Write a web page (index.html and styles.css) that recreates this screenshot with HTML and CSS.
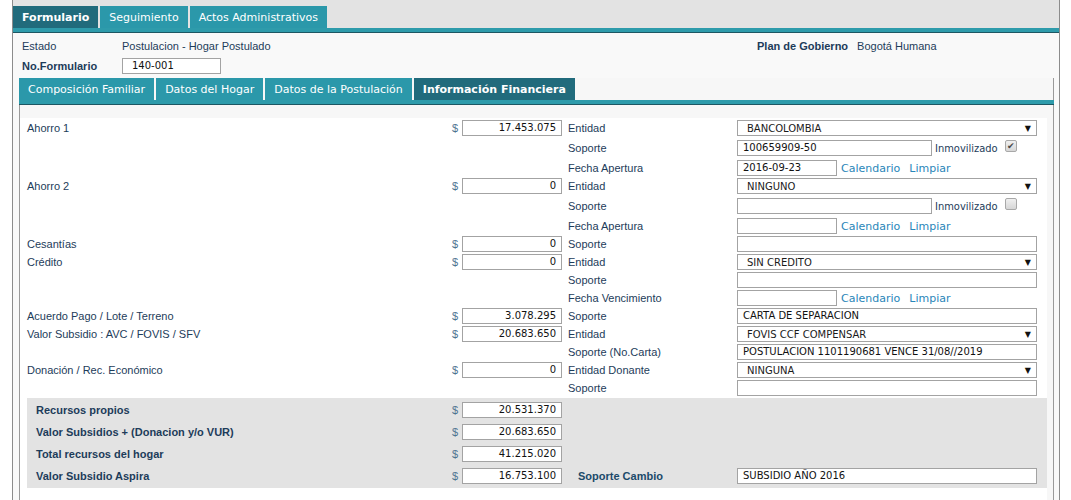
FILE: index.html
```html
<!DOCTYPE html>
<html lang="es">
<head>
<meta charset="utf-8">
<title>Formulario - Información Financiera</title>
<link rel="stylesheet" href="styles.css">
</head>
<body>
<div class="page">
  <div class="top-tabs">
    <div class="tab active">Formulario</div>
    <div class="tab">Seguimiento</div>
    <div class="tab">Actos Administrativos</div>
  </div>
  <div class="outer">
    <div class="head">
      <div class="head-row">
        <span class="hl">Estado</span>
        <span class="hv">Postulacion - Hogar Postulado</span>
        <span class="plan"><b>Plan de Gobierno</b><span class="plan-v">Bogotá Humana</span></span>
      </div>
      <div class="head-row">
        <span class="hl b">No.Formulario</span>
        <span class="field f-form">140-001</span>
      </div>
    </div>
    <div class="inner">
      <div class="inner-tabs">
        <div class="tab">Composición Familiar</div>
        <div class="tab">Datos del Hogar</div>
        <div class="tab">Datos de la Postulación</div>
        <div class="tab active">Información Financiera</div>
      </div>
      <div class="panel">
        <div class="table">
          <div class="row">
            <span class="lab">Ahorro 1</span><span class="cur">$</span><span class="field amt">17.453.075</span>
            <span class="mid">Entidad</span><span class="select">BANCOLOMBIA<i class="arrow">▼</i></span>
          </div>
          <div class="row tall">
            <span></span><span></span><span></span>
            <span class="mid">Soporte</span>
            <span class="cell"><span class="field f-sop">100659909-50</span><span class="inm">Inmovilizado</span><span class="chk on">✔</span></span>
          </div>
          <div class="row">
            <span></span><span></span><span></span>
            <span class="mid">Fecha Apertura</span>
            <span class="cell"><span class="field f-date">2016-09-23</span><a class="lnk">Calendario</a><a class="lnk">Limpiar</a></span>
          </div>
          <div class="row">
            <span class="lab">Ahorro 2</span><span class="cur">$</span><span class="field amt">0</span>
            <span class="mid">Entidad</span><span class="select">NINGUNO<i class="arrow">▼</i></span>
          </div>
          <div class="row tall">
            <span></span><span></span><span></span>
            <span class="mid">Soporte</span>
            <span class="cell"><span class="field f-sop"></span><span class="inm">Inmovilizado</span><span class="chk"></span></span>
          </div>
          <div class="row">
            <span></span><span></span><span></span>
            <span class="mid">Fecha Apertura</span>
            <span class="cell"><span class="field f-date"></span><a class="lnk">Calendario</a><a class="lnk">Limpiar</a></span>
          </div>
          <div class="row">
            <span class="lab">Cesantías</span><span class="cur">$</span><span class="field amt">0</span>
            <span class="mid">Soporte</span><span class="field f-full"></span>
          </div>
          <div class="row">
            <span class="lab">Crédito</span><span class="cur">$</span><span class="field amt">0</span>
            <span class="mid">Entidad</span><span class="select">SIN CREDITO<i class="arrow">▼</i></span>
          </div>
          <div class="row">
            <span></span><span></span><span></span>
            <span class="mid">Soporte</span><span class="field f-full"></span>
          </div>
          <div class="row">
            <span></span><span></span><span></span>
            <span class="mid">Fecha Vencimiento</span>
            <span class="cell"><span class="field f-date"></span><a class="lnk">Calendario</a><a class="lnk">Limpiar</a></span>
          </div>
          <div class="row">
            <span class="lab">Acuerdo Pago / Lote / Terreno</span><span class="cur">$</span><span class="field amt">3.078.295</span>
            <span class="mid">Soporte</span><span class="field f-full">CARTA DE SEPARACION</span>
          </div>
          <div class="row">
            <span class="lab">Valor Subsidio : AVC / FOVIS / SFV</span><span class="cur">$</span><span class="field amt">20.683.650</span>
            <span class="mid">Entidad</span><span class="select">FOVIS CCF COMPENSAR<i class="arrow">▼</i></span>
          </div>
          <div class="row">
            <span></span><span></span><span></span>
            <span class="mid">Soporte (No.Carta)</span><span class="field f-full">POSTULACION 1101190681 VENCE 31/08//2019</span>
          </div>
          <div class="row">
            <span class="lab">Donación / Rec. Económico</span><span class="cur">$</span><span class="field amt">0</span>
            <span class="mid">Entidad Donante</span><span class="select">NINGUNA<i class="arrow">▼</i></span>
          </div>
          <div class="row">
            <span></span><span></span><span></span>
            <span class="mid">Soporte</span><span class="field f-full"></span>
          </div>

          <div class="summary">
            <div class="srow">
              <span class="slab">Recursos propios</span><span class="cur">$</span><span class="field amt">20.531.370</span>
            </div>
            <div class="srow">
              <span class="slab">Valor Subsidios + (Donacion y/o VUR)</span><span class="cur">$</span><span class="field amt">20.683.650</span>
            </div>
            <div class="srow">
              <span class="slab">Total recursos del hogar</span><span class="cur">$</span><span class="field amt">41.215.020</span>
            </div>
            <div class="srow">
              <span class="slab">Valor Subsidio Aspira</span><span class="cur">$</span><span class="field amt">16.753.100</span>
              <span class="smid">Soporte Cambio</span><span class="field f-full">SUBSIDIO AÑO 2016</span>
            </div>
          </div>
        </div>
      </div>
    </div>
  </div>
</div>
</body>
</html>
```
FILE: styles.css
```css
html, body {
  margin: 0;
  padding: 0;
  background: #ffffff;
}
body {
  font-family: "Liberation Sans", Arial, sans-serif;
  font-size: 11px;
  color: #1d3c5a;
}
.page {
  margin-left: 12px;
  width: 1048px;
  border-left: 1px solid #8c8c8c;
  border-right: 1px solid #8c8c8c;
  box-sizing: border-box;
  height: 500px;
  background: #f9f9f9;
}
.top-tabs {
  background: #e3e3e3;
  padding-top: 6px;
  height: 22px;
  display: flex;
  gap: 2px;
  border-bottom: 4px solid #2e9bab;
  box-shadow: 0 1px 0 #1d5763;
}
.tab {
  font-family: "DejaVu Sans", Verdana, sans-serif;
  font-size: 11px;
  color: #ffffff;
  background: #2b98aa;
  padding: 0 9px;
  height: 22px;
  line-height: 24px;
  white-space: nowrap;
  overflow: hidden;
}
.tab.active {
  background: #216b7c;
  font-weight: bold;
}
.outer {
  padding-top: 4px;
}
.head {
  padding-left: 9px;
}
.head-row {
  display: flex;
  align-items: center;
  height: 20px;
}
.hl {
  width: 100px;
}
.hl.b {
  font-weight: bold;
}
.hv {
  width: 635px;
}
.plan b {
  font-weight: bold;
}
.plan-v {
  margin-left: 9px;
}
.inner {
  margin: 2px 5px 0 6px;
  border-left: 1px solid #9a9a9a;
  border-right: 1px solid #9a9a9a;
  background: #f7f7f7;
  height: 422px;
}
.inner-tabs {
  display: flex;
  gap: 2px;
  margin-left: -1px;
  margin-right: -1px;
  border-bottom: 4px solid #2e9bab;
  box-shadow: 0 1px 0 #1d5763;
}
.inner-tabs .tab {
  padding: 0 9px;
  line-height: 23px;
}
.panel {
  padding-top: 14px;
}
.table {
  background: #ffffff;
  width: 1020px;
  padding-left: 7px;
  padding-top: 1px;
  padding-bottom: 12px;
}
.row {
  display: grid;
  grid-template-columns: 423px 12px 100px 175px 300px;
  align-items: center;
  height: 18px;
}
.row.tall {
  height: 22px;
}
.lab {
  white-space: nowrap;
}
.cur {
  color: #4f7391;
  padding-left: 2px;
  font-size: 11px;
}
.mid {
  padding-left: 6px;
  white-space: nowrap;
}
.field {
  display: block;
  box-sizing: border-box;
  height: 16px;
  line-height: 14px;
  border: 1px solid #a3a3a3;
  background: #ffffff;
  font-family: "DejaVu Sans", Verdana, sans-serif;
  font-size: 10px;
  color: #111111;
  padding: 0 5px;
  white-space: nowrap;
  overflow: hidden;
}
.amt {
  width: 100px;
  text-align: right;
}
.f-form {
  width: 99px;
  padding-left: 9px;
}
.f-full {
  width: 300px;
}
.f-sop {
  width: 195px;
}
.f-date {
  width: 100px;
}
.select {
  display: flex;
  align-items: center;
  justify-content: space-between;
  box-sizing: border-box;
  width: 300px;
  height: 16px;
  border: 1px solid #a3a3a3;
  background: #ffffff;
  font-family: "DejaVu Sans", Verdana, sans-serif;
  font-size: 10px;
  color: #1a1a1a;
  padding: 0 5px 0 9px;
  white-space: nowrap;
}
.arrow {
  font-style: normal;
  font-size: 8px;
  color: #111111;
}
.cell {
  display: flex;
  align-items: center;
}
.inm {
  font-family: "DejaVu Sans Condensed", "DejaVu Sans", sans-serif;
  font-size: 11px;
  color: #1d3c5a;
  margin-left: 3px;
}
.chk {
  box-sizing: border-box;
  width: 12px;
  height: 12px;
  margin-left: 7px;
  margin-top: -5px;
  border: 1px solid #a8a8a8;
  border-radius: 2px;
  background: linear-gradient(#f0f0f0, #d6d6d6);
  font-size: 9px;
  line-height: 10px;
  text-align: center;
  color: #4a4a4a;
}
.lnk {
  font-family: "DejaVu Sans", Verdana, sans-serif;
  font-size: 11px;
  color: #2a86b9;
  margin-left: 4px;
  margin-right: 5px;
}
.summary {
  background: #e3e3e3;
  margin-top: 1px;
  padding: 1px 0;
}
.srow {
  display: grid;
  grid-template-columns: 414px 12px 100px 175px 300px;
  align-items: center;
  height: 22px;
  padding-left: 9px;
}
.slab {
  font-weight: bold;
  white-space: nowrap;
}
.smid {
  font-weight: bold;
  padding-left: 16px;
  color: #1b4a6a;
}
```
